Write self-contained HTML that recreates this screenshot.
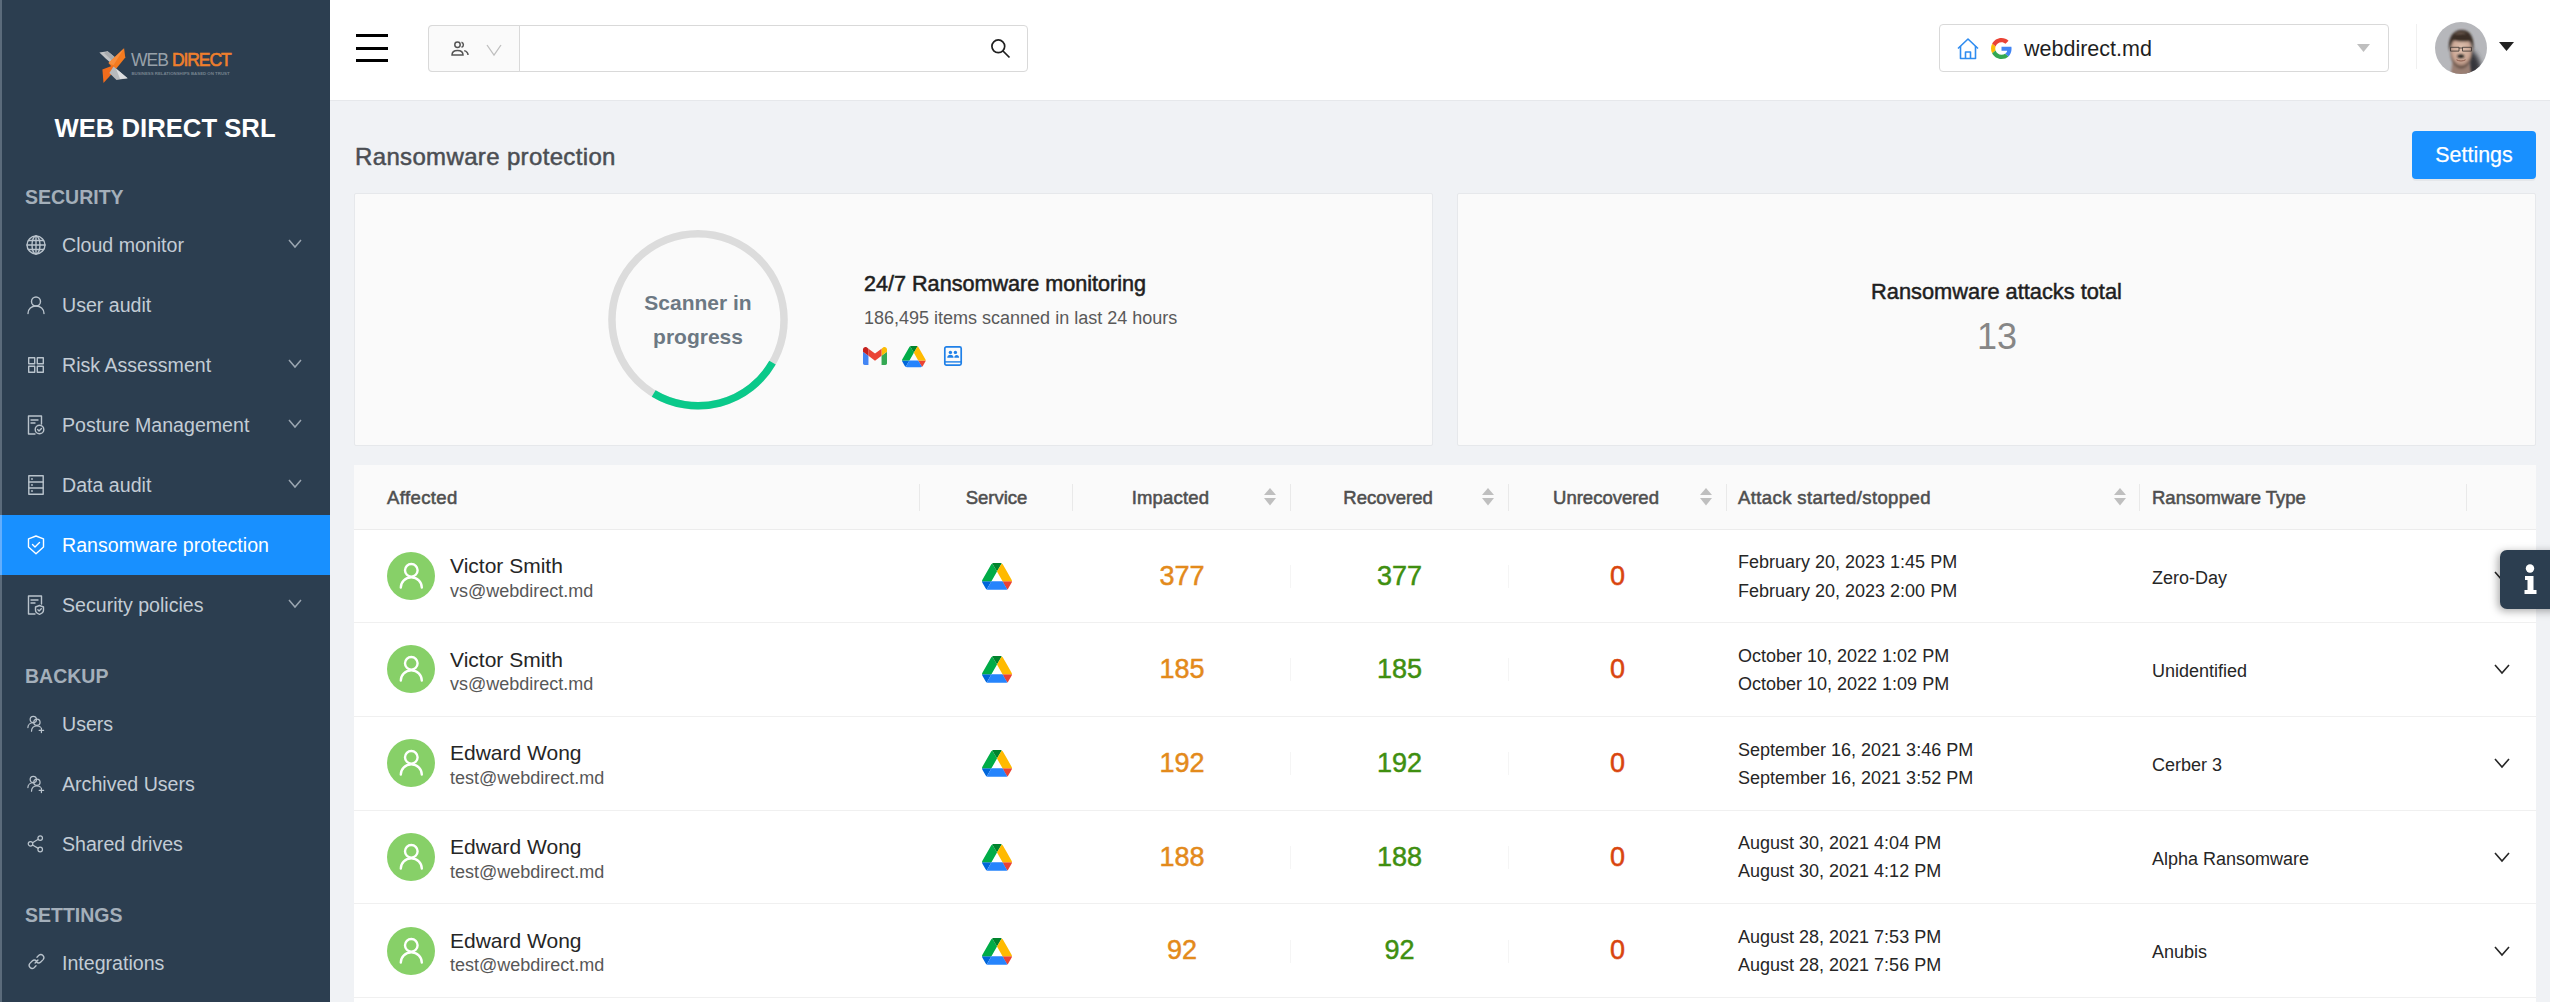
<!DOCTYPE html>
<html><head><meta charset="utf-8"><title>Ransomware protection</title>
<style>
html,body{margin:0;padding:0;}
body{width:2550px;height:1002px;position:relative;overflow:hidden;background:#f0f2f5;font-family:"Liberation Sans",sans-serif;}
.t{position:absolute;white-space:nowrap;}
svg{overflow:visible;}
</style></head><body>
<div style="position:absolute;left:0px;top:0px;width:330px;height:1002px;background:#2c3e50;"></div>
<div style="position:absolute;left:0px;top:0px;width:2px;height:1002px;background:#5b6b7b;"></div>
<svg style="position:absolute;left:0px;top:0px;" width="330" height="100" viewBox="0 0 330 100"><polygon points="99.4,52.4 107.6,51.2 116.5,58.5 113.5,65.3 105.9,58.8" fill="#c2c4c6"/><polygon points="107.6,51.2 116.5,58.5 113.5,62 104,53" fill="#a8abae"/><polygon points="124.1,48.2 125.3,57.6 114.7,70.6 108.5,63" fill="#f47a1f"/><polygon points="124.1,48.2 113.5,65.3 108.5,63" fill="#f88e3e"/><polygon points="102.4,69.4 113.5,65.3 114.7,70.6 109.4,76.5 103.5,83" fill="#f26c1c"/><polygon points="113.5,66.5 127.6,78.2 116.5,80 109.4,72.9" fill="#b7babd"/><polygon points="116,68.5 127.6,78.2 120,79" fill="#dcdee0"/></svg>
<div class="t" style="left:131.00px;top:52.19px;font-size:17.5px;line-height:17.5px;font-weight:400;color:#98a1a9;letter-spacing:-1px;">WEB</div>
<div class="t" style="left:172.00px;top:52.19px;font-size:17.5px;line-height:17.5px;font-weight:400;color:#ee7f2d;letter-spacing:-1.1px;-webkit-text-stroke:0.6px #ee7f2d;">DIRECT</div>
<div class="t" style="left:-319.50px;width:1000px;text-align:center;top:71.82px;font-size:4.35px;line-height:4.35px;font-weight:700;color:#76838f;letter-spacing:0px;">BUSINESS RELATIONSHIPS BASED ON TRUST</div>
<div class="t" style="left:-335.00px;width:1000px;text-align:center;top:116.24px;font-size:25.7px;line-height:25.7px;font-weight:700;color:#ffffff;">WEB DIRECT SRL</div>
<div class="t" style="left:25.00px;top:187.99px;font-size:19.5px;line-height:19.5px;font-weight:700;color:#a4afba;">SECURITY</div>
<div class="t" style="left:25.00px;top:666.99px;font-size:19.5px;line-height:19.5px;font-weight:700;color:#a4afba;">BACKUP</div>
<div class="t" style="left:25.00px;top:905.99px;font-size:19.5px;line-height:19.5px;font-weight:700;color:#a4afba;">SETTINGS</div>
<svg style="position:absolute;left:26px;top:235px;" width="20" height="20" viewBox="0 0 20 20"><g fill="none" stroke="#b9c3cc" stroke-width="1.4" stroke-linecap="round" stroke-linejoin="round"><circle cx="10" cy="10" r="9"/><ellipse cx="10" cy="10" rx="4" ry="9"/><line x1="10" y1="1" x2="10" y2="19"/><line x1="1" y1="10" x2="19" y2="10"/><path d="M2.5 5.5h15M2.5 14.5h15"/></g></svg>
<div class="t" style="left:62.00px;top:236.41px;font-size:19.6px;line-height:19.6px;font-weight:400;color:#c3ccd5;">Cloud monitor</div>
<svg style="position:absolute;left:288.0px;top:238.5px;" width="14" height="9" viewBox="-1 -1 14 9"><polyline points="0,0 6.0,7 12,0" fill="none" stroke="#9aa5b0" stroke-width="1.5"/></svg>
<svg style="position:absolute;left:27px;top:296px;" width="18" height="18" viewBox="0 0 18 18"><g fill="none" stroke="#b9c3cc" stroke-width="1.4" stroke-linecap="round" stroke-linejoin="round"><circle cx="9" cy="5.5" r="4.5"/><path d="M1 17.5c0-4.5 3.6-7.5 8-7.5s8 3 8 7.5"/></g></svg>
<div class="t" style="left:62.00px;top:296.41px;font-size:19.6px;line-height:19.6px;font-weight:400;color:#c3ccd5;">User audit</div>
<svg style="position:absolute;left:28px;top:357px;" width="16" height="16" viewBox="0 0 16 16"><g fill="none" stroke="#b9c3cc" stroke-width="1.4" stroke-linecap="round" stroke-linejoin="round"><rect x="0.7" y="0.7" width="6" height="6"/><rect x="9.3" y="0.7" width="6" height="6"/><rect x="0.7" y="9.3" width="6" height="6"/><rect x="9.3" y="9.3" width="6" height="6"/></g></svg>
<div class="t" style="left:62.00px;top:356.41px;font-size:19.6px;line-height:19.6px;font-weight:400;color:#c3ccd5;">Risk Assessment</div>
<svg style="position:absolute;left:288.0px;top:358.5px;" width="14" height="9" viewBox="-1 -1 14 9"><polyline points="0,0 6.0,7 12,0" fill="none" stroke="#9aa5b0" stroke-width="1.5"/></svg>
<svg style="position:absolute;left:27px;top:415px;" width="18" height="20" viewBox="0 0 18 20"><g fill="none" stroke="#b9c3cc" stroke-width="1.4" stroke-linecap="round" stroke-linejoin="round"><path d="M8 19H1.5V1h13v8"/><path d="M4 5h7M4 8h4"/><circle cx="12.5" cy="14.5" r="4.3"/><path d="M10.6 14.6l1.4 1.4 2.5-2.6"/></g></svg>
<div class="t" style="left:62.00px;top:416.41px;font-size:19.6px;line-height:19.6px;font-weight:400;color:#c3ccd5;">Posture Management</div>
<svg style="position:absolute;left:288.0px;top:418.5px;" width="14" height="9" viewBox="-1 -1 14 9"><polyline points="0,0 6.0,7 12,0" fill="none" stroke="#9aa5b0" stroke-width="1.5"/></svg>
<svg style="position:absolute;left:28px;top:475px;" width="16" height="20" viewBox="0 0 16 20"><g fill="none" stroke="#b9c3cc" stroke-width="1.4" stroke-linecap="round" stroke-linejoin="round"><rect x="0.8" y="0.8" width="14.4" height="18.4"/><path d="M0.8 7h14.4M0.8 13h14.4"/></g><g fill="#b9c3cc"><circle cx="4" cy="4" r="0.9"/><circle cx="4" cy="10" r="0.9"/><circle cx="4" cy="16" r="0.9"/></g></svg>
<div class="t" style="left:62.00px;top:476.41px;font-size:19.6px;line-height:19.6px;font-weight:400;color:#c3ccd5;">Data audit</div>
<svg style="position:absolute;left:288.0px;top:478.5px;" width="14" height="9" viewBox="-1 -1 14 9"><polyline points="0,0 6.0,7 12,0" fill="none" stroke="#9aa5b0" stroke-width="1.5"/></svg>
<div style="position:absolute;left:0px;top:515px;width:330px;height:60px;background:#1890ff;"></div>
<div style="position:absolute;left:0px;top:515px;width:2px;height:60px;background:#63aefc;"></div>
<svg style="position:absolute;left:27px;top:535px;" width="18" height="20" viewBox="0 0 18 20"><g fill="none" stroke="#ffffff" stroke-width="1.4" stroke-linecap="round" stroke-linejoin="round"><path d="M9 1l7.5 2.8v8.2L9 18.8 1.5 12V3.8z"/><path d="M5.5 9.5l2.5 2.5 4.5-4.5"/></g></svg>
<div class="t" style="left:62.00px;top:536.41px;font-size:19.6px;line-height:19.6px;font-weight:400;color:#ffffff;">Ransomware protection</div>
<svg style="position:absolute;left:27px;top:595px;" width="18" height="20" viewBox="0 0 18 20"><g fill="none" stroke="#b9c3cc" stroke-width="1.4" stroke-linecap="round" stroke-linejoin="round"><path d="M8 19H1.5V1h13v8"/><path d="M4 5h7M4 8h4"/><path d="M12.5 10.5l4 1.5v3c0 2.2-1.8 3.6-4 4.3-2.2-.7-4-2.1-4-4.3v-3z"/><path d="M10.9 14.8l1.2 1.1 2.2-2.2"/></g></svg>
<div class="t" style="left:62.00px;top:596.41px;font-size:19.6px;line-height:19.6px;font-weight:400;color:#c3ccd5;">Security policies</div>
<svg style="position:absolute;left:288.0px;top:598.5px;" width="14" height="9" viewBox="-1 -1 14 9"><polyline points="0,0 6.0,7 12,0" fill="none" stroke="#9aa5b0" stroke-width="1.5"/></svg>
<svg style="position:absolute;left:27px;top:715px;" width="18" height="18" viewBox="0 0 20 20"><g fill="none" stroke="#b9c3cc" stroke-width="1.4" stroke-linecap="round" stroke-linejoin="round" stroke-width="1.55"><circle cx="7" cy="5" r="3.5"/><path d="M1 14c0-3 2.5-5.5 6-5.5"/><circle cx="11" cy="8" r="3.5"/><path d="M5 18c0-3.5 2.5-6 6-6 1.5 0 3 .5 4 1.5"/><path d="M16 14.5v5M13.5 17h5"/></g></svg>
<div class="t" style="left:62.00px;top:715.41px;font-size:19.6px;line-height:19.6px;font-weight:400;color:#c3ccd5;">Users</div>
<svg style="position:absolute;left:27px;top:775px;" width="18" height="18" viewBox="0 0 20 20"><g fill="none" stroke="#b9c3cc" stroke-width="1.4" stroke-linecap="round" stroke-linejoin="round" stroke-width="1.55"><circle cx="7" cy="5" r="3.5"/><path d="M1 14c0-3 2.5-5.5 6-5.5"/><circle cx="11" cy="8" r="3.5"/><path d="M5 18c0-3.5 2.5-6 6-6 1.5 0 3 .5 4 1.5"/><path d="M16 14.5v5M13.5 17h5"/></g></svg>
<div class="t" style="left:62.00px;top:775.41px;font-size:19.6px;line-height:19.6px;font-weight:400;color:#c3ccd5;">Archived Users</div>
<svg style="position:absolute;left:27.2px;top:835.2px;" width="17.6" height="17.6" viewBox="0 0 20 20"><g fill="none" stroke="#b9c3cc" stroke-width="1.4" stroke-linecap="round" stroke-linejoin="round" stroke-width="1.6"><circle cx="4" cy="10" r="2.6"/><circle cx="15" cy="3.5" r="2.6"/><circle cx="15" cy="16.5" r="2.6"/><path d="M6.3 8.7l6.5-3.9M6.3 11.3l6.5 3.9"/></g></svg>
<div class="t" style="left:62.00px;top:835.41px;font-size:19.6px;line-height:19.6px;font-weight:400;color:#c3ccd5;">Shared drives</div>
<svg style="position:absolute;left:26.5px;top:952px;" width="19" height="19" viewBox="0 0 20 20"><g fill="none" stroke="#b9c3cc" stroke-width="1.4" stroke-linecap="round" stroke-linejoin="round" stroke-width="1.5"><path d="M8.5 11.5l3-3"/><path d="M10.5 5.5l2-2a3.2 3.2 0 0 1 4.5 4.5l-2.5 2.5a3.2 3.2 0 0 1-4.5 0"/><path d="M9.5 14.5l-2 2A3.2 3.2 0 0 1 3 12l2.5-2.5a3.2 3.2 0 0 1 4.5 0"/></g></svg>
<div class="t" style="left:62.00px;top:954.41px;font-size:19.6px;line-height:19.6px;font-weight:400;color:#c3ccd5;">Integrations</div>
<div style="position:absolute;left:330px;top:0px;width:2220px;height:100px;background:#ffffff;border-bottom:1px solid #e6e8eb;"></div>
<div style="position:absolute;left:356px;top:34px;width:32px;height:3px;background:#000;"></div>
<div style="position:absolute;left:356px;top:46.5px;width:32px;height:3px;background:#000;"></div>
<div style="position:absolute;left:356px;top:59px;width:32px;height:3px;background:#000;"></div>
<div style="position:absolute;left:428px;top:25px;width:600px;height:47px;box-sizing:border-box;border:1px solid #d9d9d9;border-radius:4px;background:#fff;"></div>
<div style="position:absolute;left:428px;top:25px;width:92px;height:47px;box-sizing:border-box;border:1px solid #d9d9d9;border-radius:4px 0 0 4px;background:#fafafa;"></div>
<svg style="position:absolute;left:451px;top:41px;" width="19" height="15" viewBox="0 0 19 15"><g fill="none" stroke="#555" stroke-width="1.5"><circle cx="6.5" cy="3.8" r="2.7"/><path d="M1 14h11c0-3-2.4-4.6-5.5-4.6S1 11 1 14z"/><path d="M10.5 1.3a2.6 2.6 0 0 1 0 5"/><path d="M13.2 9.6c2 .6 3.8 2 3.8 4.4"/></g></svg>
<svg style="position:absolute;left:486.0px;top:43.5px;" width="16" height="12" viewBox="-1 -1 16 12"><polyline points="0,0 7.0,10 14,0" fill="none" stroke="#bfbfbf" stroke-width="1.3"/></svg>
<svg style="position:absolute;left:989px;top:37px;" width="23" height="23" viewBox="0 0 23 23"><g fill="none" stroke="#1f1f1f" stroke-width="1.7"><circle cx="9.3" cy="9.3" r="6.4"/><line x1="14" y1="14" x2="20.5" y2="20.5"/></g></svg>
<div style="position:absolute;left:1939px;top:24px;width:450px;height:48px;box-sizing:border-box;border:1px solid #d9d9d9;border-radius:4px;background:#fff;"></div>
<svg style="position:absolute;left:1956px;top:37px;" width="24" height="23" viewBox="0 0 24 23"><g fill="none" stroke="#2f8cf0" stroke-width="1.6" stroke-linejoin="round"><path d="M2 11.5L12 2l10 9.5"/><path d="M4.5 9v12.5h15V9"/><path d="M9.5 21.5v-6.5h5v6.5"/></g></svg>
<svg style="position:absolute;left:1991px;top:38px;" width="21" height="21" viewBox="0 0 48 48"><path fill="#EA4335" d="M24 9.5c3.54 0 6.71 1.22 9.21 3.6l6.85-6.85C35.9 2.38 30.47 0 24 0 14.62 0 6.51 5.38 2.56 13.22l7.98 6.19C12.43 13.72 17.74 9.5 24 9.5z"/><path fill="#4285F4" d="M46.98 24.55c0-1.57-.15-3.09-.38-4.55H24v9.02h12.94c-.58 2.960-2.26 5.48-4.78 7.18l7.73 6c4.51-4.18 7.09-10.36 7.09-17.650z"/><path fill="#FBBC05" d="M10.53 28.59c-.48-1.45-.76-2.99-.76-4.59s.27-3.14.76-4.59l-7.98-6.19C.92 16.46 0 20.12 0 24c0 3.88.92 7.54 2.56 10.78l7.97-6.19z"/><path fill="#34A853" d="M24 48c6.48 0 11.93-2.13 15.89-5.81l-7.73-6c-2.15 1.45-4.92 2.3-8.16 2.3-6.26 0-11.57-4.22-13.47-9.91l-7.98 6.19C6.51 42.62 14.62 48 24 48z"/></svg>
<div class="t" style="left:2024.00px;top:38.80px;font-size:21.5px;line-height:21.5px;font-weight:400;color:#1f1f1f;">webdirect.md</div>
<svg style="position:absolute;left:2357px;top:44px;" width="13" height="8" viewBox="0 0 13 8"><polygon points="0,0 13,0 6.5,8" fill="#bfbfbf"/></svg>
<div style="position:absolute;left:2416px;top:24px;width:1px;height:45px;background:#f0f0f0;"></div>
<svg style="position:absolute;left:2435px;top:22px;" width="52" height="52" viewBox="0 0 52 52"><defs><clipPath id="av"><circle cx="26" cy="26" r="26"/></clipPath><filter id="blr" x="-50%" y="-50%" width="200%" height="200%"><feGaussianBlur stdDeviation="2.5"/></filter><filter id="blr2" x="-50%" y="-50%" width="200%" height="200%"><feGaussianBlur stdDeviation="0.9"/></filter><radialGradient id="face" cx="0.5" cy="0.42" r="0.62"><stop offset="0" stop-color="#dfc0ae"/><stop offset="0.7" stop-color="#cba795"/><stop offset="1" stop-color="#a07f70"/></radialGradient></defs><g clip-path="url(#av)"><rect width="52" height="52" fill="#b6b7bb"/><path d="M35 27c5 3 10 10 11 19l-2 8H30z" fill="#34353a" filter="url(#blr)"/><g filter="url(#blr2)"><path d="M17.5 40h17l2 14h-21z" fill="#9a7f73"/><ellipse cx="26.2" cy="29.5" rx="11" ry="17.5" fill="#6f5a4f"/><ellipse cx="26.2" cy="29" rx="10.2" ry="14.5" fill="url(#face)"/><path d="M14.2 30c-2-14 3.5-22 12.3-22s13.5 7 11.7 22c-.8-5.5-1.8-9.5-3.3-11-5 .8-11.5.8-17-.8-1.6 3-2.8 6.5-3.7 11.8z" fill="#3a2e27"/><path d="M19 12c3-2 9-2.5 13-.5-4 .5-9 1-13 .5z" fill="#6e5c50"/></g><path d="M15.5 25.3h8.5v3.8h-8.5zM27.5 25.3h9v3.8h-9z" fill="none" stroke="#3a3330" stroke-width="0.8"/><path d="M24 26h3.5" stroke="#3a3330" stroke-width="0.8"/><ellipse cx="25.8" cy="34.3" rx="3.4" ry="1.7" fill="#1d1a19" filter="url(#blr2)"/><path d="M21.5 37.8c2.8 1.6 6.2 1.6 9 0" stroke="#8a5a4a" stroke-width="1" fill="none"/></g></svg>
<svg style="position:absolute;left:2499px;top:42px;" width="15" height="9" viewBox="0 0 15 9"><polygon points="0,0 15,0 7.5,9" fill="#222"/></svg>
<div class="t" style="left:355.00px;top:144.68px;font-size:24px;line-height:24px;font-weight:400;color:#4b4e53;letter-spacing:0.35px;-webkit-text-stroke:0.5px #4b4e53;">Ransomware protection</div>
<div style="position:absolute;left:2412px;top:131px;width:124px;height:48px;background:#1890ff;border-radius:4px;box-shadow:0 2px 0 rgba(0,0,0,0.045);"></div>
<div class="t" style="left:1974.00px;width:1000px;text-align:center;top:144.88px;font-size:21.4px;line-height:21.4px;font-weight:400;color:#ffffff;-webkit-text-stroke:0.25px #ffffff;">Settings</div>
<div style="position:absolute;left:354px;top:193px;width:1079px;height:253px;box-sizing:border-box;border:1px solid #e6e8eb;background:#fafafa;border-radius:2px;"></div>
<div style="position:absolute;left:1457px;top:193px;width:1079px;height:253px;box-sizing:border-box;border:1px solid #e6e8eb;background:#fafafa;border-radius:2px;"></div>
<svg style="position:absolute;left:598px;top:220px;" width="200" height="200" viewBox="598 220 200 200"><circle cx="698" cy="319.7" r="86.05" fill="none" stroke="#dcdcdc" stroke-width="7.5"/><path d="M772.52 362.72 A86.05 86.05 0 0 1 653.68 393.46" fill="none" stroke="#0ac98a" stroke-width="7.5"/></svg>
<div class="t" style="left:198.00px;width:1000px;text-align:center;top:291.92px;font-size:21px;line-height:21px;font-weight:700;color:#6c7883;">Scanner in</div>
<div class="t" style="left:198.00px;width:1000px;text-align:center;top:325.52px;font-size:21px;line-height:21px;font-weight:700;color:#6c7883;">progress</div>
<div class="t" style="left:864.00px;top:273.02px;font-size:21.6px;line-height:21.6px;font-weight:400;color:#1f1f1f;-webkit-text-stroke:0.55px #1f1f1f;">24/7 Ransomware monitoring</div>
<div class="t" style="left:864.00px;top:308.76px;font-size:18px;line-height:18px;font-weight:400;color:#595959;">186,495 items scanned in last 24 hours</div>
<svg style="position:absolute;left:863px;top:347px;" width="24" height="18" viewBox="52 42 88 66"><path fill="#4285f4" d="M58 108h14V74L52 59v43c0 3.32 2.69 6 6 6"/><path fill="#34a853" d="M120 108h14c3.32 0 6-2.69 6-6V59l-20 15"/><path fill="#fbbc04" d="M120 48v26l20-15v-8c0-7.42-8.47-11.65-14.4-7.2"/><path fill="#ea4335" d="M72 74V48l24 18 24-18v26L96 92"/><path fill="#c5221f" d="M52 51v8l20 15V48l-5.6-4.2c-5.94-4.45-14.4-.22-14.4 7.2"/></svg>
<svg style="position:absolute;left:902px;top:346px;" width="23.7" height="21.2" viewBox="0 0 87.3 78"><path d="m6.6 66.85 3.85 6.65c.8 1.4 1.950 2.5 3.3 3.3l13.75-23.8h-27.5c0 1.55.4 3.1 1.2 4.5z" fill="#0066da"/><path d="m43.65 25-13.75-23.8c-1.35.8-2.5 1.9-3.3 3.3l-25.4 44a9.06 9.06 0 0 0 -1.2 4.5h27.5z" fill="#00ac47"/><path d="m73.55 76.8c1.35-.8 2.5-1.9 3.3-3.3l1.6-2.75 7.65-13.25c.8-1.4 1.2-2.95 1.2-4.5h-27.502l5.852 11.5z" fill="#ea4335"/><path d="m43.65 25 13.75-23.8c-1.35-.8-2.9-1.2-4.5-1.2h-18.5c-1.6 0-3.15.45-4.5 1.2z" fill="#00832d"/><path d="m59.8 53h-32.3l-13.75 23.8c1.35.8 2.9 1.2 4.5 1.2h50.8c1.6 0 3.15-.45 4.5-1.2z" fill="#2684fc"/><path d="m73.4 26.5-12.7-22c-.8-1.4-1.95-2.5-3.3-3.3l-13.75 23.8 16.15 28h27.45c0-1.55-.4-3.1-1.2-4.5z" fill="#ffba00"/></svg>
<svg style="position:absolute;left:943px;top:345px;" width="20" height="22" viewBox="0 0 20 22"><rect x="1.8" y="1.8" width="16.4" height="18.4" rx="1.6" fill="none" stroke="#1f80e8" stroke-width="1.7"/><rect x="1.8" y="16.2" width="16.4" height="1.4" fill="#1f80e8"/><circle cx="7.4" cy="7.4" r="1.7" fill="#1f80e8"/><circle cx="12.4" cy="7.4" r="1.7" fill="#1f80e8"/><path d="M4.2 12.7c0-1.9 1.4-2.9 3.2-2.9s3.2 1 3.2 2.9zM11.3 12.7c0-1.6 1-2.6 2.4-2.6s2.4 1 2.4 2.6z" fill="#1f80e8"/></svg>
<div class="t" style="left:1496.50px;width:1000px;text-align:center;top:280.55px;font-size:21.8px;line-height:21.8px;font-weight:400;color:#1f1f1f;-webkit-text-stroke:0.5px #1f1f1f;">Ransomware attacks total</div>
<div class="t" style="left:1497.00px;width:1000px;text-align:center;top:318.53px;font-size:36px;line-height:36px;font-weight:400;color:#868686;">13</div>
<div style="position:absolute;left:354px;top:465px;width:2182px;height:64px;background:#fafafa;"></div>
<div style="position:absolute;left:354px;top:529px;width:2182px;height:1px;background:#ececec;"></div>
<div style="position:absolute;left:919px;top:484px;width:1px;height:27px;background:#e9e9e9;"></div>
<div style="position:absolute;left:1072px;top:484px;width:1px;height:27px;background:#e9e9e9;"></div>
<div style="position:absolute;left:1290px;top:484px;width:1px;height:27px;background:#e9e9e9;"></div>
<div style="position:absolute;left:1508px;top:484px;width:1px;height:27px;background:#e9e9e9;"></div>
<div style="position:absolute;left:1726px;top:484px;width:1px;height:27px;background:#e9e9e9;"></div>
<div style="position:absolute;left:2139px;top:484px;width:1px;height:27px;background:#e9e9e9;"></div>
<div style="position:absolute;left:2466px;top:484px;width:1px;height:27px;background:#e9e9e9;"></div>
<div class="t" style="left:387.00px;top:489.34px;font-size:18.5px;line-height:18.5px;font-weight:400;color:#4f4f4f;-webkit-text-stroke:0.55px #4f4f4f;letter-spacing:0.4px;">Affected</div>
<div class="t" style="left:496.50px;width:1000px;text-align:center;top:489.34px;font-size:18.5px;line-height:18.5px;font-weight:400;color:#4f4f4f;-webkit-text-stroke:0.55px #4f4f4f;">Service</div>
<div class="t" style="left:670.50px;width:1000px;text-align:center;top:489.34px;font-size:18.5px;line-height:18.5px;font-weight:400;color:#4f4f4f;-webkit-text-stroke:0.55px #4f4f4f;letter-spacing:0.2px;">Impacted</div>
<div class="t" style="left:888.00px;width:1000px;text-align:center;top:489.34px;font-size:18.5px;line-height:18.5px;font-weight:400;color:#4f4f4f;-webkit-text-stroke:0.55px #4f4f4f;">Recovered</div>
<div class="t" style="left:1106.00px;width:1000px;text-align:center;top:489.34px;font-size:18.5px;line-height:18.5px;font-weight:400;color:#4f4f4f;-webkit-text-stroke:0.55px #4f4f4f;">Unrecovered</div>
<div class="t" style="left:1738.00px;top:489.34px;font-size:18.5px;line-height:18.5px;font-weight:400;color:#4f4f4f;-webkit-text-stroke:0.55px #4f4f4f;letter-spacing:0.4px;">Attack started/stopped</div>
<div class="t" style="left:2152.00px;top:489.34px;font-size:18.5px;line-height:18.5px;font-weight:400;color:#4f4f4f;-webkit-text-stroke:0.55px #4f4f4f;">Ransomware Type</div>
<svg style="position:absolute;left:1264px;top:488px;" width="12" height="18" viewBox="0 0 12 18"><polygon points="6,0 12,7 0,7" fill="#bfbfbf"/><polygon points="0,10 12,10 6,17.5" fill="#bfbfbf"/></svg>
<svg style="position:absolute;left:1482px;top:488px;" width="12" height="18" viewBox="0 0 12 18"><polygon points="6,0 12,7 0,7" fill="#bfbfbf"/><polygon points="0,10 12,10 6,17.5" fill="#bfbfbf"/></svg>
<svg style="position:absolute;left:1700px;top:488px;" width="12" height="18" viewBox="0 0 12 18"><polygon points="6,0 12,7 0,7" fill="#bfbfbf"/><polygon points="0,10 12,10 6,17.5" fill="#bfbfbf"/></svg>
<svg style="position:absolute;left:2114px;top:488px;" width="12" height="18" viewBox="0 0 12 18"><polygon points="6,0 12,7 0,7" fill="#bfbfbf"/><polygon points="0,10 12,10 6,17.5" fill="#bfbfbf"/></svg>
<div style="position:absolute;left:354px;top:530.00px;width:2182px;height:92.00px;background:#fff;"></div>
<div style="position:absolute;left:354px;top:622.00px;width:2182px;height:1px;background:#f0f0f0;"></div>
<svg style="position:absolute;left:387px;top:552.0px;" width="48" height="48" viewBox="0 0 48 48"><circle cx="24" cy="24" r="24" fill="#87d068"/><g fill="none" stroke="#fff" stroke-width="2.4" stroke-linecap="round"><circle cx="24.3" cy="18.3" r="6.3"/><path d="M13.8 35.6c0-5.8 4.6-10.2 10.5-10.2s10.5 4.4 10.5 10.2"/></g></svg>
<div class="t" style="left:450.00px;top:555.22px;font-size:21px;line-height:21px;font-weight:400;color:#262626;">Victor Smith</div>
<div class="t" style="left:450.00px;top:581.76px;font-size:18px;line-height:18px;font-weight:400;color:#575757;">vs@webdirect.md</div>
<svg style="position:absolute;left:982px;top:563.0px;" width="30" height="26.8" viewBox="0 0 87.3 78"><path d="m6.6 66.85 3.85 6.65c.8 1.4 1.950 2.5 3.3 3.3l13.75-23.8h-27.5c0 1.55.4 3.1 1.2 4.5z" fill="#0066da"/><path d="m43.65 25-13.75-23.8c-1.35.8-2.5 1.9-3.3 3.3l-25.4 44a9.06 9.06 0 0 0 -1.2 4.5h27.5z" fill="#00ac47"/><path d="m73.55 76.8c1.35-.8 2.5-1.9 3.3-3.3l1.6-2.75 7.65-13.25c.8-1.4 1.2-2.95 1.2-4.5h-27.502l5.852 11.5z" fill="#ea4335"/><path d="m43.65 25 13.75-23.8c-1.35-.8-2.9-1.2-4.5-1.2h-18.5c-1.6 0-3.15.45-4.5 1.2z" fill="#00832d"/><path d="m59.8 53h-32.3l-13.75 23.8c1.35.8 2.9 1.2 4.5 1.2h50.8c1.6 0 3.15-.45 4.5-1.2z" fill="#2684fc"/><path d="m73.4 26.5-12.7-22c-.8-1.4-1.95-2.5-3.3-3.3l-13.75 23.8 16.15 28h27.45c0-1.55-.4-3.1-1.2-4.5z" fill="#ffba00"/></svg>
<div class="t" style="left:682.00px;width:1000px;text-align:center;top:562.64px;font-size:27px;line-height:27px;font-weight:400;color:#e38a1b;-webkit-text-stroke:0.5px #e38a1b;">377</div>
<div class="t" style="left:899.50px;width:1000px;text-align:center;top:562.64px;font-size:27px;line-height:27px;font-weight:400;color:#3f8f10;-webkit-text-stroke:0.5px #3f8f10;">377</div>
<div class="t" style="left:1117.50px;width:1000px;text-align:center;top:562.64px;font-size:27px;line-height:27px;font-weight:400;color:#d9450e;-webkit-text-stroke:0.5px #d9450e;">0</div>
<div style="position:absolute;left:1290px;top:565.0px;width:1px;height:23px;background:#f5f5f5;"></div>
<div style="position:absolute;left:1508px;top:565.0px;width:1px;height:23px;background:#f5f5f5;"></div>
<div class="t" style="left:1738.00px;top:553.46px;font-size:18px;line-height:18px;font-weight:400;color:#262626;">February 20, 2023 1:45 PM</div>
<div class="t" style="left:1738.00px;top:581.56px;font-size:18px;line-height:18px;font-weight:400;color:#262626;">February 20, 2023 2:00 PM</div>
<div class="t" style="left:2152.00px;top:568.76px;font-size:18px;line-height:18px;font-weight:400;color:#262626;">Zero-Day</div>
<svg style="position:absolute;left:2494.0px;top:571.0px;" width="16" height="10" viewBox="-1 -1 16 10"><polyline points="0,0 7.0,8 14,0" fill="none" stroke="#262626" stroke-width="1.6"/></svg>
<div style="position:absolute;left:354px;top:623.00px;width:2182px;height:92.75px;background:#fff;"></div>
<div style="position:absolute;left:354px;top:715.75px;width:2182px;height:1px;background:#f0f0f0;"></div>
<svg style="position:absolute;left:387px;top:645.375px;" width="48" height="48" viewBox="0 0 48 48"><circle cx="24" cy="24" r="24" fill="#87d068"/><g fill="none" stroke="#fff" stroke-width="2.4" stroke-linecap="round"><circle cx="24.3" cy="18.3" r="6.3"/><path d="M13.8 35.6c0-5.8 4.6-10.2 10.5-10.2s10.5 4.4 10.5 10.2"/></g></svg>
<div class="t" style="left:450.00px;top:648.60px;font-size:21px;line-height:21px;font-weight:400;color:#262626;">Victor Smith</div>
<div class="t" style="left:450.00px;top:675.14px;font-size:18px;line-height:18px;font-weight:400;color:#575757;">vs@webdirect.md</div>
<svg style="position:absolute;left:982px;top:656.375px;" width="30" height="26.8" viewBox="0 0 87.3 78"><path d="m6.6 66.85 3.85 6.65c.8 1.4 1.950 2.5 3.3 3.3l13.75-23.8h-27.5c0 1.55.4 3.1 1.2 4.5z" fill="#0066da"/><path d="m43.65 25-13.75-23.8c-1.35.8-2.5 1.9-3.3 3.3l-25.4 44a9.06 9.06 0 0 0 -1.2 4.5h27.5z" fill="#00ac47"/><path d="m73.55 76.8c1.35-.8 2.5-1.9 3.3-3.3l1.6-2.75 7.65-13.25c.8-1.4 1.2-2.95 1.2-4.5h-27.502l5.852 11.5z" fill="#ea4335"/><path d="m43.65 25 13.75-23.8c-1.35-.8-2.9-1.2-4.5-1.2h-18.5c-1.6 0-3.15.45-4.5 1.2z" fill="#00832d"/><path d="m59.8 53h-32.3l-13.75 23.8c1.35.8 2.9 1.2 4.5 1.2h50.8c1.6 0 3.15-.45 4.5-1.2z" fill="#2684fc"/><path d="m73.4 26.5-12.7-22c-.8-1.4-1.95-2.5-3.3-3.3l-13.75 23.8 16.15 28h27.45c0-1.55-.4-3.1-1.2-4.5z" fill="#ffba00"/></svg>
<div class="t" style="left:682.00px;width:1000px;text-align:center;top:656.02px;font-size:27px;line-height:27px;font-weight:400;color:#e38a1b;-webkit-text-stroke:0.5px #e38a1b;">185</div>
<div class="t" style="left:899.50px;width:1000px;text-align:center;top:656.02px;font-size:27px;line-height:27px;font-weight:400;color:#3f8f10;-webkit-text-stroke:0.5px #3f8f10;">185</div>
<div class="t" style="left:1117.50px;width:1000px;text-align:center;top:656.02px;font-size:27px;line-height:27px;font-weight:400;color:#d9450e;-webkit-text-stroke:0.5px #d9450e;">0</div>
<div style="position:absolute;left:1290px;top:658.375px;width:1px;height:23px;background:#f5f5f5;"></div>
<div style="position:absolute;left:1508px;top:658.375px;width:1px;height:23px;background:#f5f5f5;"></div>
<div class="t" style="left:1738.00px;top:646.84px;font-size:18px;line-height:18px;font-weight:400;color:#262626;">October 10, 2022 1:02 PM</div>
<div class="t" style="left:1738.00px;top:674.94px;font-size:18px;line-height:18px;font-weight:400;color:#262626;">October 10, 2022 1:09 PM</div>
<div class="t" style="left:2152.00px;top:662.14px;font-size:18px;line-height:18px;font-weight:400;color:#262626;">Unidentified</div>
<svg style="position:absolute;left:2494.0px;top:664.375px;" width="16" height="10" viewBox="-1 -1 16 10"><polyline points="0,0 7.0,8 14,0" fill="none" stroke="#262626" stroke-width="1.6"/></svg>
<div style="position:absolute;left:354px;top:716.75px;width:2182px;height:92.75px;background:#fff;"></div>
<div style="position:absolute;left:354px;top:809.50px;width:2182px;height:1px;background:#f0f0f0;"></div>
<svg style="position:absolute;left:387px;top:739.125px;" width="48" height="48" viewBox="0 0 48 48"><circle cx="24" cy="24" r="24" fill="#87d068"/><g fill="none" stroke="#fff" stroke-width="2.4" stroke-linecap="round"><circle cx="24.3" cy="18.3" r="6.3"/><path d="M13.8 35.6c0-5.8 4.6-10.2 10.5-10.2s10.5 4.4 10.5 10.2"/></g></svg>
<div class="t" style="left:450.00px;top:742.35px;font-size:21px;line-height:21px;font-weight:400;color:#262626;">Edward Wong</div>
<div class="t" style="left:450.00px;top:768.89px;font-size:18px;line-height:18px;font-weight:400;color:#575757;">test@webdirect.md</div>
<svg style="position:absolute;left:982px;top:750.125px;" width="30" height="26.8" viewBox="0 0 87.3 78"><path d="m6.6 66.85 3.85 6.65c.8 1.4 1.950 2.5 3.3 3.3l13.75-23.8h-27.5c0 1.55.4 3.1 1.2 4.5z" fill="#0066da"/><path d="m43.65 25-13.75-23.8c-1.35.8-2.5 1.9-3.3 3.3l-25.4 44a9.06 9.06 0 0 0 -1.2 4.5h27.5z" fill="#00ac47"/><path d="m73.55 76.8c1.35-.8 2.5-1.9 3.3-3.3l1.6-2.75 7.65-13.25c.8-1.4 1.2-2.95 1.2-4.5h-27.502l5.852 11.5z" fill="#ea4335"/><path d="m43.65 25 13.75-23.8c-1.35-.8-2.9-1.2-4.5-1.2h-18.5c-1.6 0-3.15.45-4.5 1.2z" fill="#00832d"/><path d="m59.8 53h-32.3l-13.75 23.8c1.35.8 2.9 1.2 4.5 1.2h50.8c1.6 0 3.15-.45 4.5-1.2z" fill="#2684fc"/><path d="m73.4 26.5-12.7-22c-.8-1.4-1.95-2.5-3.3-3.3l-13.75 23.8 16.15 28h27.45c0-1.55-.4-3.1-1.2-4.5z" fill="#ffba00"/></svg>
<div class="t" style="left:682.00px;width:1000px;text-align:center;top:749.77px;font-size:27px;line-height:27px;font-weight:400;color:#e38a1b;-webkit-text-stroke:0.5px #e38a1b;">192</div>
<div class="t" style="left:899.50px;width:1000px;text-align:center;top:749.77px;font-size:27px;line-height:27px;font-weight:400;color:#3f8f10;-webkit-text-stroke:0.5px #3f8f10;">192</div>
<div class="t" style="left:1117.50px;width:1000px;text-align:center;top:749.77px;font-size:27px;line-height:27px;font-weight:400;color:#d9450e;-webkit-text-stroke:0.5px #d9450e;">0</div>
<div style="position:absolute;left:1290px;top:752.125px;width:1px;height:23px;background:#f5f5f5;"></div>
<div style="position:absolute;left:1508px;top:752.125px;width:1px;height:23px;background:#f5f5f5;"></div>
<div class="t" style="left:1738.00px;top:740.59px;font-size:18px;line-height:18px;font-weight:400;color:#262626;">September 16, 2021 3:46 PM</div>
<div class="t" style="left:1738.00px;top:768.69px;font-size:18px;line-height:18px;font-weight:400;color:#262626;">September 16, 2021 3:52 PM</div>
<div class="t" style="left:2152.00px;top:755.89px;font-size:18px;line-height:18px;font-weight:400;color:#262626;">Cerber 3</div>
<svg style="position:absolute;left:2494.0px;top:758.125px;" width="16" height="10" viewBox="-1 -1 16 10"><polyline points="0,0 7.0,8 14,0" fill="none" stroke="#262626" stroke-width="1.6"/></svg>
<div style="position:absolute;left:354px;top:810.50px;width:2182px;height:92.75px;background:#fff;"></div>
<div style="position:absolute;left:354px;top:903.25px;width:2182px;height:1px;background:#f0f0f0;"></div>
<svg style="position:absolute;left:387px;top:832.875px;" width="48" height="48" viewBox="0 0 48 48"><circle cx="24" cy="24" r="24" fill="#87d068"/><g fill="none" stroke="#fff" stroke-width="2.4" stroke-linecap="round"><circle cx="24.3" cy="18.3" r="6.3"/><path d="M13.8 35.6c0-5.8 4.6-10.2 10.5-10.2s10.5 4.4 10.5 10.2"/></g></svg>
<div class="t" style="left:450.00px;top:836.10px;font-size:21px;line-height:21px;font-weight:400;color:#262626;">Edward Wong</div>
<div class="t" style="left:450.00px;top:862.64px;font-size:18px;line-height:18px;font-weight:400;color:#575757;">test@webdirect.md</div>
<svg style="position:absolute;left:982px;top:843.875px;" width="30" height="26.8" viewBox="0 0 87.3 78"><path d="m6.6 66.85 3.85 6.65c.8 1.4 1.950 2.5 3.3 3.3l13.75-23.8h-27.5c0 1.55.4 3.1 1.2 4.5z" fill="#0066da"/><path d="m43.65 25-13.75-23.8c-1.35.8-2.5 1.9-3.3 3.3l-25.4 44a9.06 9.06 0 0 0 -1.2 4.5h27.5z" fill="#00ac47"/><path d="m73.55 76.8c1.35-.8 2.5-1.9 3.3-3.3l1.6-2.75 7.65-13.25c.8-1.4 1.2-2.95 1.2-4.5h-27.502l5.852 11.5z" fill="#ea4335"/><path d="m43.65 25 13.75-23.8c-1.35-.8-2.9-1.2-4.5-1.2h-18.5c-1.6 0-3.15.45-4.5 1.2z" fill="#00832d"/><path d="m59.8 53h-32.3l-13.75 23.8c1.35.8 2.9 1.2 4.5 1.2h50.8c1.6 0 3.15-.45 4.5-1.2z" fill="#2684fc"/><path d="m73.4 26.5-12.7-22c-.8-1.4-1.95-2.5-3.3-3.3l-13.75 23.8 16.15 28h27.45c0-1.55-.4-3.1-1.2-4.5z" fill="#ffba00"/></svg>
<div class="t" style="left:682.00px;width:1000px;text-align:center;top:843.52px;font-size:27px;line-height:27px;font-weight:400;color:#e38a1b;-webkit-text-stroke:0.5px #e38a1b;">188</div>
<div class="t" style="left:899.50px;width:1000px;text-align:center;top:843.52px;font-size:27px;line-height:27px;font-weight:400;color:#3f8f10;-webkit-text-stroke:0.5px #3f8f10;">188</div>
<div class="t" style="left:1117.50px;width:1000px;text-align:center;top:843.52px;font-size:27px;line-height:27px;font-weight:400;color:#d9450e;-webkit-text-stroke:0.5px #d9450e;">0</div>
<div style="position:absolute;left:1290px;top:845.875px;width:1px;height:23px;background:#f5f5f5;"></div>
<div style="position:absolute;left:1508px;top:845.875px;width:1px;height:23px;background:#f5f5f5;"></div>
<div class="t" style="left:1738.00px;top:834.34px;font-size:18px;line-height:18px;font-weight:400;color:#262626;">August 30, 2021 4:04 PM</div>
<div class="t" style="left:1738.00px;top:862.44px;font-size:18px;line-height:18px;font-weight:400;color:#262626;">August 30, 2021 4:12 PM</div>
<div class="t" style="left:2152.00px;top:849.64px;font-size:18px;line-height:18px;font-weight:400;color:#262626;">Alpha Ransomware</div>
<svg style="position:absolute;left:2494.0px;top:851.875px;" width="16" height="10" viewBox="-1 -1 16 10"><polyline points="0,0 7.0,8 14,0" fill="none" stroke="#262626" stroke-width="1.6"/></svg>
<div style="position:absolute;left:354px;top:904.25px;width:2182px;height:92.75px;background:#fff;"></div>
<div style="position:absolute;left:354px;top:997.00px;width:2182px;height:1px;background:#f0f0f0;"></div>
<svg style="position:absolute;left:387px;top:926.625px;" width="48" height="48" viewBox="0 0 48 48"><circle cx="24" cy="24" r="24" fill="#87d068"/><g fill="none" stroke="#fff" stroke-width="2.4" stroke-linecap="round"><circle cx="24.3" cy="18.3" r="6.3"/><path d="M13.8 35.6c0-5.8 4.6-10.2 10.5-10.2s10.5 4.4 10.5 10.2"/></g></svg>
<div class="t" style="left:450.00px;top:929.85px;font-size:21px;line-height:21px;font-weight:400;color:#262626;">Edward Wong</div>
<div class="t" style="left:450.00px;top:956.39px;font-size:18px;line-height:18px;font-weight:400;color:#575757;">test@webdirect.md</div>
<svg style="position:absolute;left:982px;top:937.625px;" width="30" height="26.8" viewBox="0 0 87.3 78"><path d="m6.6 66.85 3.85 6.65c.8 1.4 1.950 2.5 3.3 3.3l13.75-23.8h-27.5c0 1.55.4 3.1 1.2 4.5z" fill="#0066da"/><path d="m43.65 25-13.75-23.8c-1.35.8-2.5 1.9-3.3 3.3l-25.4 44a9.06 9.06 0 0 0 -1.2 4.5h27.5z" fill="#00ac47"/><path d="m73.55 76.8c1.35-.8 2.5-1.9 3.3-3.3l1.6-2.75 7.65-13.25c.8-1.4 1.2-2.95 1.2-4.5h-27.502l5.852 11.5z" fill="#ea4335"/><path d="m43.65 25 13.75-23.8c-1.35-.8-2.9-1.2-4.5-1.2h-18.5c-1.6 0-3.15.45-4.5 1.2z" fill="#00832d"/><path d="m59.8 53h-32.3l-13.75 23.8c1.35.8 2.9 1.2 4.5 1.2h50.8c1.6 0 3.15-.45 4.5-1.2z" fill="#2684fc"/><path d="m73.4 26.5-12.7-22c-.8-1.4-1.95-2.5-3.3-3.3l-13.75 23.8 16.15 28h27.45c0-1.55-.4-3.1-1.2-4.5z" fill="#ffba00"/></svg>
<div class="t" style="left:682.00px;width:1000px;text-align:center;top:937.27px;font-size:27px;line-height:27px;font-weight:400;color:#e38a1b;-webkit-text-stroke:0.5px #e38a1b;">92</div>
<div class="t" style="left:899.50px;width:1000px;text-align:center;top:937.27px;font-size:27px;line-height:27px;font-weight:400;color:#3f8f10;-webkit-text-stroke:0.5px #3f8f10;">92</div>
<div class="t" style="left:1117.50px;width:1000px;text-align:center;top:937.27px;font-size:27px;line-height:27px;font-weight:400;color:#d9450e;-webkit-text-stroke:0.5px #d9450e;">0</div>
<div style="position:absolute;left:1290px;top:939.625px;width:1px;height:23px;background:#f5f5f5;"></div>
<div style="position:absolute;left:1508px;top:939.625px;width:1px;height:23px;background:#f5f5f5;"></div>
<div class="t" style="left:1738.00px;top:928.09px;font-size:18px;line-height:18px;font-weight:400;color:#262626;">August 28, 2021 7:53 PM</div>
<div class="t" style="left:1738.00px;top:956.19px;font-size:18px;line-height:18px;font-weight:400;color:#262626;">August 28, 2021 7:56 PM</div>
<div class="t" style="left:2152.00px;top:943.39px;font-size:18px;line-height:18px;font-weight:400;color:#262626;">Anubis</div>
<svg style="position:absolute;left:2494.0px;top:945.625px;" width="16" height="10" viewBox="-1 -1 16 10"><polyline points="0,0 7.0,8 14,0" fill="none" stroke="#262626" stroke-width="1.6"/></svg>
<div style="position:absolute;left:354px;top:998px;width:2182px;height:10px;background:#fff;"></div>
<div style="position:absolute;left:2500px;top:550px;width:60px;height:59px;background:#2c3e50;border-radius:7px 0 0 7px;box-shadow:-2px 2px 8px rgba(0,0,0,0.35);"></div>
<svg style="position:absolute;left:2522px;top:562px;" width="18" height="34" viewBox="0 0 18 34"><circle cx="8" cy="6.5" r="4.2" fill="#fff"/><path d="M3 14h8.5v14h3v4h-12v-4h3v-10h-2.5z" fill="#fff"/></svg>
</body></html>
